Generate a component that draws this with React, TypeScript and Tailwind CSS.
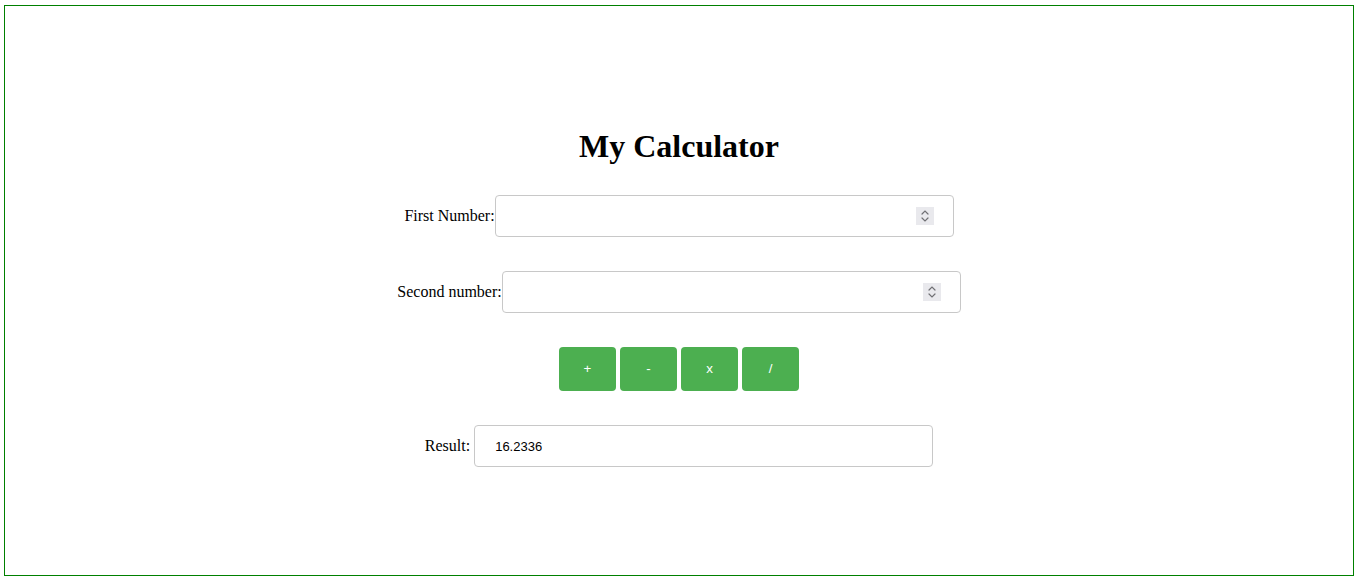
import React from 'react'

const serif = { fontFamily: '"Liberation Serif", "Times New Roman", serif' }
const sans = { fontFamily: '"Liberation Sans", Arial, sans-serif' }

const NumberField: React.FC<{ label: string }> = ({ label }) => (
  <div className="flex items-center justify-center">
    <label className="text-[16px] text-black" style={serif}>{label}</label>
    <div className="relative">
      <input
        type="text"
        className="w-[459px] h-[42px] px-[20px] border border-[#c8c8c8] rounded-[4px] text-[13px] outline-none bg-white"
        style={sans}
      />
      {/* spin buttons */}
      <div className="absolute right-[20px] top-[12px] w-[18px] h-[18px] bg-[#e9e9ed] flex items-center justify-center">
        <svg width="12" height="16" viewBox="0 0 12 16" fill="none" stroke="#707074" strokeWidth="1.2" strokeLinecap="round">
          <path d="M3 6 L6 3 L9 6" />
          <path d="M3 10 L6 13 L9 10" />
        </svg>
      </div>
    </div>
  </div>
)

export default function App() {
  const ops = ['+', '-', 'x', '/']
  return (
    <div className="bg-white w-[1362px] h-[583px] pt-[5px] pl-[4px]">
      <div className="w-[1350px] h-[571px] border border-[#008000] flex flex-col items-center">
        <h1 className="mt-[122px] text-[32px] leading-[37px] font-bold text-black" style={serif}>
          My Calculator
        </h1>
        <div className="mt-[30px] flex flex-col items-center">
          <NumberField label="First Number:" />
          <div className="mt-[34px]">
            <NumberField label="Second number:" />
          </div>
          <div className="mt-[34px] flex gap-[4px]">
            {ops.map((op) => (
              <button
                key={op}
                className="w-[57px] h-[44px] bg-[#4caf50] text-white text-[13.33px] rounded-[4px]"
                style={sans}
              >
                {op}
              </button>
            ))}
          </div>
          <div className="mt-[34px] flex items-center justify-center gap-[4px]">
            <label className="text-[16px] text-black" style={serif}>Result:</label>
            <input
              type="text"
              readOnly
              value="16.2336"
              className="w-[459px] h-[42px] px-[20px] border border-[#c8c8c8] rounded-[4px] text-[13px] text-black outline-none bg-white"
              style={sans}
            />
          </div>
        </div>
      </div>
    </div>
  )
}
